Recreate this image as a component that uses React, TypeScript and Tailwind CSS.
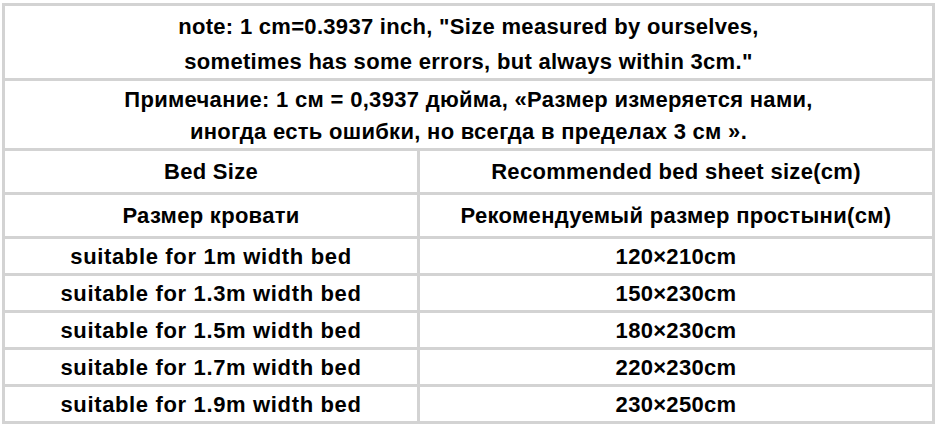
import React from 'react';

const rows: [string, string][] = [
  ['suitable for 1m width bed', '120×210cm'],
  ['suitable for 1.3m width bed', '150×230cm'],
  ['suitable for 1.5m width bed', '180×230cm'],
  ['suitable for 1.7m width bed', '220×230cm'],
  ['suitable for 1.9m width bed', '230×250cm'],
];

const cell = 'flex items-center justify-center border-r-[3px] border-b-[3px] border-[#d3d3d3] text-center';

export default function App() {
  return (
    <div className="w-[937px] h-[426px] bg-white pt-[3px] pl-[2px]">
      <div
        className="w-[933px] border-l-[3px] border-t-[3px] border-[#d3d3d3] text-[22px] font-bold text-black tracking-[0.3px]"
        style={{ fontFamily: '"Liberation Sans", Arial, sans-serif' }}
      >
        <div className={`${cell} h-[75px] leading-[35px] pt-[3px]`}>
          <div>
            note: 1 cm=0.3937 inch, "Size measured by ourselves,
            <br />
            sometimes has some errors, but always within 3cm."
          </div>
        </div>
        <div className={`${cell} h-[70px] leading-[32px] pt-[2px]`}>
          <div>
            Примечание: 1 см = 0,3937 дюйма, «Размер измеряется нами,
            <br />
            иногда есть ошибки, но всегда в пределах 3 см ».
          </div>
        </div>
        <div className="flex h-[44px]">
          <div className={`${cell} w-[415px]`}>Bed Size</div>
          <div className={`${cell} w-[515px]`}>Recommended bed sheet size(cm)</div>
        </div>
        <div className="flex h-[44px]">
          <div className={`${cell} w-[415px]`}>Размер кровати</div>
          <div className={`${cell} w-[515px]`}>Рекомендуемый размер простыни(см)</div>
        </div>
        {rows.map(([a, b]) => (
          <div key={a} className="flex h-[37px]">
            <div className={`${cell} w-[415px] tracking-[0.65px]`}>{a}</div>
            <div className={`${cell} w-[515px]`}>{b}</div>
          </div>
        ))}
      </div>
    </div>
  );
}
